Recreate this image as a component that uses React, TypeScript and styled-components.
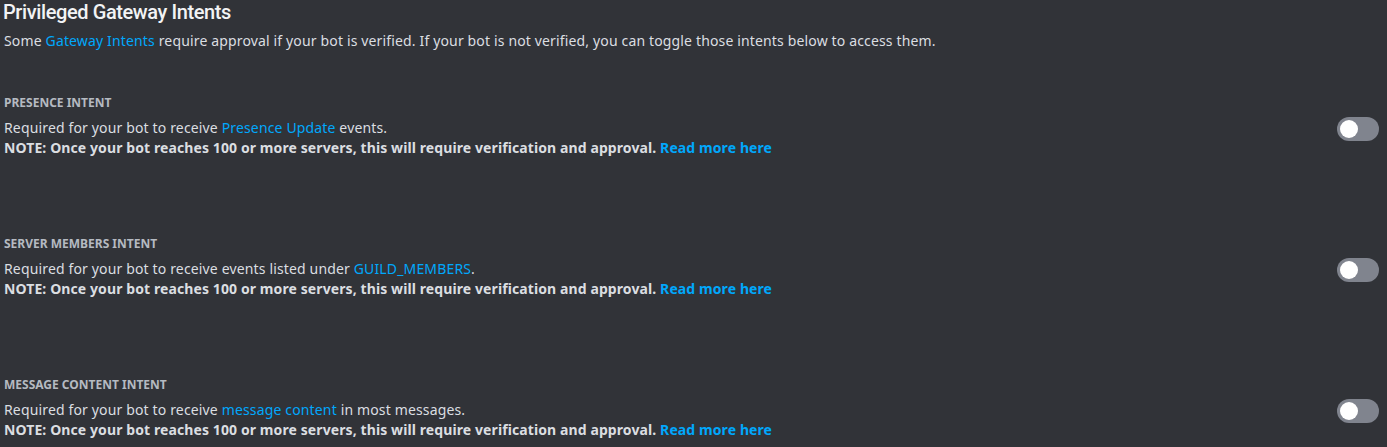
import React from "react";
import styled, { createGlobalStyle } from "styled-components";

const Global = createGlobalStyle`
  html, body { margin: 0; padding: 0; background: #313338; }
  body { font-family: "Noto Sans", "Open Sans", sans-serif; }
`;

const Page = styled.div`
  background: #313338;
  min-height: 447px;
  padding: 0 4px;
  box-sizing: border-box;
  color: #dbdee1;
  overflow: hidden;
`;

const Title = styled.h2`
  margin: 0 0 0 -1px;
  font-family: Roboto, "Noto Sans", sans-serif;
  font-size: 20px;
  line-height: 24px;
  font-weight: 500;
  letter-spacing: -0.4px;
  color: #f2f3f5;
`;

const Intro = styled.p`
  margin: 7px 0 0;
  font-size: 14px;
  line-height: 20px;
  letter-spacing: 0.15px;
  color: #dbdee1;
`;

const Link = styled.a<{ $bold?: boolean }>`
  color: #00a8fc;
  text-decoration: none;
  font-weight: ${(p) => (p.$bold ? 700 : 400)};
`;

const Sections = styled.div`
  margin-top: 44px;
  display: flex;
  flex-direction: column;
  gap: 78px;
`;

const Section = styled.section`
  display: flex;
  align-items: flex-start;
  justify-content: space-between;
`;

const Info = styled.div`
  display: flex;
  flex-direction: column;
`;

const Label = styled.h3`
  margin: 0;
  font-size: 12px;
  line-height: 16px;
  font-weight: 700;
  text-transform: uppercase;
  color: #b5bac1;
`;

const Desc = styled.div`
  margin-top: 7px;
  font-size: 14px;
  line-height: 20px;
  letter-spacing: 0.15px;
  color: #dbdee1;
`;

const Note = styled.div`
  font-weight: 700;
  letter-spacing: 0.1px;
`;

const Toggle = styled.div`
  width: 42px;
  height: 24px;
  margin-top: 22px;
  margin-right: 4px;
  border-radius: 12px;
  background: #80848e;
  position: relative;
  flex-shrink: 0;
`;

const Knob = styled.span`
  position: absolute;
  top: 3px;
  left: 3px;
  width: 18px;
  height: 18px;
  border-radius: 50%;
  background: #ffffff;
`;

const NoteText = () => (
  <Note>
    NOTE: Once your bot reaches 100 or more servers, this will require verification and approval.{" "}
    <Link $bold href="#">Read more here</Link>
  </Note>
);

const intents = [
  {
    label: "Presence Intent",
    before: "Required for your bot to receive ",
    link: "Presence Update",
    after: " events.",
  },
  {
    label: "Server Members Intent",
    before: "Required for your bot to receive events listed under ",
    link: "GUILD_MEMBERS",
    after: ".",
  },
  {
    label: "Message Content Intent",
    before: "Required for your bot to receive ",
    link: "message content",
    after: " in most messages.",
  },
];

export default function App() {
  return (
    <>
      <Global />
      <Page>
        <Title>Privileged Gateway Intents</Title>
        <Intro>
          Some <Link href="#">Gateway Intents</Link> require approval if your bot is verified. If your bot is not
          verified, you can toggle those intents below to access them.
        </Intro>
        <Sections>
          {intents.map((i) => (
            <Section key={i.label}>
              <Info>
                <Label>{i.label}</Label>
                <Desc>
                  <div>
                    {i.before}
                    <Link href="#">{i.link}</Link>
                    {i.after}
                  </div>
                  <NoteText />
                </Desc>
              </Info>
              <Toggle>
                <Knob />
              </Toggle>
            </Section>
          ))}
        </Sections>
      </Page>
    </>
  );
}
